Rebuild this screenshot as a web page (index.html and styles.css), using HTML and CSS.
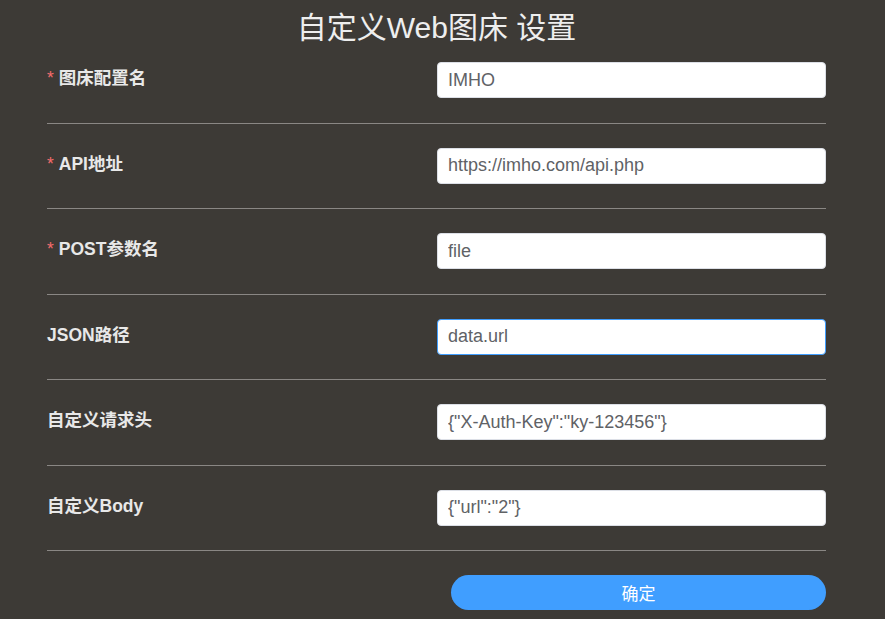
FILE: index.html
```html
<!DOCTYPE html>
<html lang="zh-CN">
<head>
    <meta charset="UTF-8">
    <meta name="viewport" content="width=device-width, initial-scale=1.0">
    <title>自定义Web图床 设置</title>
    <link rel="stylesheet" href="styles.css">
</head>
<body>
    <div class="container">
        <h1>自定义Web图床 设置</h1>

        <form class="settings-form">
            <div class="form-item">
                <label class="required">图床配置名</label>
                <input type="text" value="IMHO">
            </div>
            <div class="form-item">
                <label class="required">API地址</label>
                <input type="text" value="https://imho.com/api.php">
            </div>
            <div class="form-item">
                <label class="required">POST参数名</label>
                <input type="text" value="file">
            </div>
            <div class="form-item">
                <label>JSON路径</label>
                <input type="text" class="focused" value="data.url">
            </div>
            <div class="form-item">
                <label>自定义请求头</label>
                <input type="text" value='{"X-Auth-Key":"ky-123456"}'>
            </div>
            <div class="form-item">
                <label>自定义Body</label>
                <input type="text" value='{"url":"2"}'>
            </div>

            <div class="actions">
                <button type="button" class="confirm-btn">确定</button>
            </div>
        </form>
    </div>
</body>
</html>
```

FILE: styles.css
```css
body {
    margin: 0;
    background-color: #3d3a36;
    font-family: "Liberation Sans", Arial, "Noto Sans CJK SC", sans-serif;
    color: #eeeeee;
}
.container {
    width: 779px;
    margin-left: 47px;
}
h1 {
    margin: 0;
    padding-top: 9px;
    line-height: 38px;
    font-size: 30px;
    font-weight: normal;
    text-align: center;
    color: #eeeeee;
}
.form-item {
    display: flex;
    align-items: flex-start;
    padding: 24px 0 24.5px;
    border-bottom: 1px solid #8a8784;
}
.form-item:first-child {
    padding-top: 15px;
}
.form-item label {
    width: 390px;
    line-height: 32px;
    font-size: 17.5px;
    font-weight: bold;
    color: #e8e8e8;
}
.form-item label.required::before {
    content: "*";
    color: #f56c6c;
    margin-right: 5px;
    font-weight: normal;
}
.form-item input {
    flex: 1;
    height: 36px;
    box-sizing: border-box;
    padding: 0 10px;
    border: 1px solid #dcdfe6;
    border-radius: 4px;
    background-color: #fff;
    font-family: "Liberation Sans", Arial, sans-serif;
    font-size: 18px;
    color: #606266;
    outline: none;
}
.form-item input.focused {
    border-color: #409eff;
}
.actions {
    display: flex;
    justify-content: flex-end;
    padding-top: 24px;
}
.confirm-btn {
    width: 375px;
    height: 35px;
    border: none;
    border-radius: 18px;
    background-color: #409eff;
    color: #fff;
    font-family: "Liberation Sans", Arial, "Noto Sans CJK SC", sans-serif;
    font-size: 17px;
    cursor: pointer;
}
```
